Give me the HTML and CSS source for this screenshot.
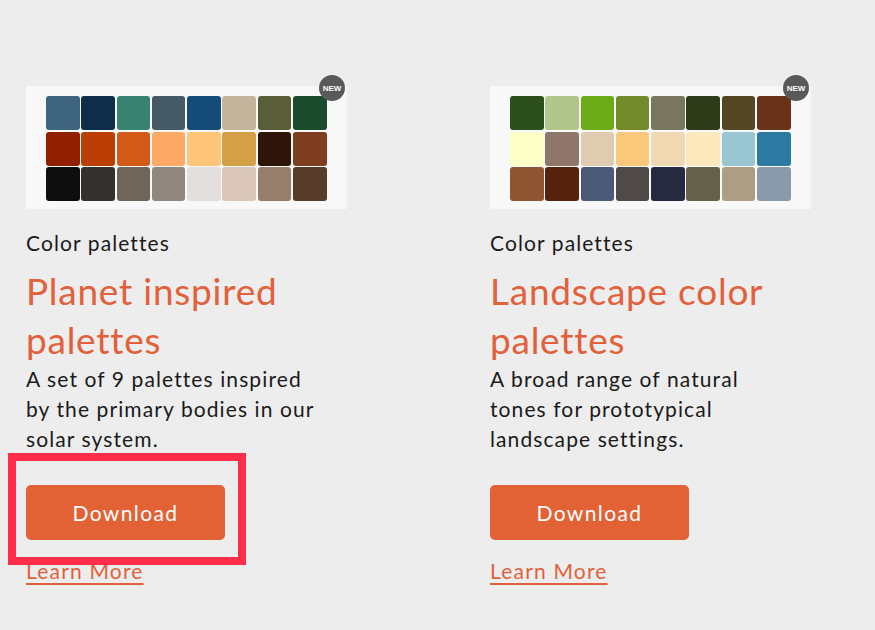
FILE: index.html
```html
<!DOCTYPE html>
<html lang="en">

<head>
    <meta charset="UTF-8">
    <meta name="viewport" content="width=device-width, initial-scale=1.0">
    <title>Color palettes</title>
    <link rel="stylesheet" href="styles.css">
</head>

<body>

    <main class="cards">

        <!-- Planet palettes -->
        <article class="card">
            <div class="preview">
                <div class="swatches">
                    <span class="swatch" style="background:#3e6480"></span>
                    <span class="swatch" style="background:#0d2d4b"></span>
                    <span class="swatch" style="background:#378270"></span>
                    <span class="swatch" style="background:#465966"></span>
                    <span class="swatch" style="background:#144b78"></span>
                    <span class="swatch" style="background:#c5b59c"></span>
                    <span class="swatch" style="background:#5a5e38"></span>
                    <span class="swatch" style="background:#1b4a2c"></span>

                    <span class="swatch" style="background:#922000"></span>
                    <span class="swatch" style="background:#bb3f05"></span>
                    <span class="swatch" style="background:#d45b17"></span>
                    <span class="swatch" style="background:#fdaa66"></span>
                    <span class="swatch" style="background:#fec47a"></span>
                    <span class="swatch" style="background:#d59f45"></span>
                    <span class="swatch" style="background:#2f140a"></span>
                    <span class="swatch" style="background:#7e3e1f"></span>

                    <span class="swatch" style="background:#0e0e0e"></span>
                    <span class="swatch" style="background:#34302e"></span>
                    <span class="swatch" style="background:#6f655b"></span>
                    <span class="swatch" style="background:#908880"></span>
                    <span class="swatch" style="background:#e2dedb"></span>
                    <span class="swatch" style="background:#dac7b9"></span>
                    <span class="swatch" style="background:#977d6c"></span>
                    <span class="swatch" style="background:#573d29"></span>
                </div>
                <span class="badge">NEW</span>
            </div>
            <p class="category">Color palettes</p>
            <h2 class="title">Planet inspired palettes</h2>
            <p class="desc">A set of 9 palettes inspired by the primary bodies in our solar system.</p>
            <div class="actions">
                <a href="#" class="download-btn">Download</a>
                <!-- highlight frame -->
                <span class="highlight"></span>
            </div>
            <a href="#" class="learn-more">Learn More</a>
        </article>

        <!-- Landscape palettes -->
        <article class="card">
            <div class="preview">
                <div class="swatches">
                    <span class="swatch" style="background:#2c4f1c"></span>
                    <span class="swatch" style="background:#b0c68b"></span>
                    <span class="swatch" style="background:#6bab17"></span>
                    <span class="swatch" style="background:#738a2a"></span>
                    <span class="swatch" style="background:#78765e"></span>
                    <span class="swatch" style="background:#2e3b19"></span>
                    <span class="swatch" style="background:#554623"></span>
                    <span class="swatch" style="background:#6a3219"></span>

                    <span class="swatch" style="background:#fefec8"></span>
                    <span class="swatch" style="background:#8e776a"></span>
                    <span class="swatch" style="background:#dfcbb0"></span>
                    <span class="swatch" style="background:#fbc77b"></span>
                    <span class="swatch" style="background:#f0d8b2"></span>
                    <span class="swatch" style="background:#fbe9bb"></span>
                    <span class="swatch" style="background:#99c6d0"></span>
                    <span class="swatch" style="background:#2c7aa2"></span>

                    <span class="swatch" style="background:#8f5530"></span>
                    <span class="swatch" style="background:#55230b"></span>
                    <span class="swatch" style="background:#4b5878"></span>
                    <span class="swatch" style="background:#4f4a48"></span>
                    <span class="swatch" style="background:#252a40"></span>
                    <span class="swatch" style="background:#66614a"></span>
                    <span class="swatch" style="background:#ac9e84"></span>
                    <span class="swatch" style="background:#8a9aaa"></span>
                </div>
                <span class="badge">NEW</span>
            </div>
            <p class="category">Color palettes</p>
            <h2 class="title">Landscape color palettes</h2>
            <p class="desc">A broad range of natural tones for prototypical landscape settings.</p>
            <div class="actions">
                <a href="#" class="download-btn">Download</a>
            </div>
            <a href="#" class="learn-more">Learn More</a>
        </article>

    </main>

</body>

</html>
```

FILE: styles.css
```css
/* Page */
body {
    margin: 0;
    background-color: #ededed;
    font-family: Lato, "Open Sans", sans-serif;
    color: #1a1a1a;
}

.cards {
    display: flex;
    gap: 143px;
    padding: 86px 0 0 26px;
}

.card {
    width: 321px;
    display: flex;
    flex-direction: column;
    align-items: flex-start;
}

/* Palette preview */
.preview {
    position: relative;
    width: 321px;
    height: 123px;
    background-color: #f8f8f8;
    box-sizing: border-box;
    padding: 10px 0 0 20px;
}

.swatches {
    display: grid;
    grid-template-columns: repeat(8, 33.5px);
    grid-auto-rows: 34px;
    gap: 1.5px 1.8px;
}

.swatch {
    border-radius: 3px;
}

.badge {
    position: absolute;
    top: -11px;
    right: 2px;
    width: 26px;
    height: 26px;
    border-radius: 50%;
    background-color: #595959;
    color: #fff;
    font-family: "Liberation Sans", Arial, sans-serif;
    font-size: 8px;
    font-weight: bold;
    display: flex;
    align-items: center;
    justify-content: center;
}

/* Texts */
.category {
    margin: 19px 0 0;
    font-size: 21px;
    line-height: 30px;
    letter-spacing: 1.1px;
}

.title {
    margin: 8px 0 0;
    font-size: 37px;
    line-height: 49px;
    font-weight: normal;
    color: #e2603a;
    letter-spacing: 0.75px;
}

.desc {
    max-width: 300px;
    margin: 0;
    font-size: 21px;
    line-height: 30px;
    letter-spacing: 1.1px;
}

/* Buttons */
.actions {
    position: relative;
    margin-top: 31px;
}

.download-btn {
    display: flex;
    align-items: center;
    justify-content: center;
    width: 199px;
    height: 55px;
    border-radius: 5px;
    background-color: #e26236;
    color: #fff;
    font-size: 21px;
    letter-spacing: 1.4px;
    text-decoration: none;
}

.highlight {
    position: absolute;
    top: -32px;
    left: -18px;
    width: 238px;
    height: 112px;
    box-sizing: border-box;
    border: 8px solid #fe2e4a;
}

.learn-more {
    margin-top: 16px;
    font-size: 21px;
    line-height: 30px;
    letter-spacing: 1.2px;
    color: #e2603a;
    text-decoration: underline;
    text-underline-offset: 4px;
}
```
